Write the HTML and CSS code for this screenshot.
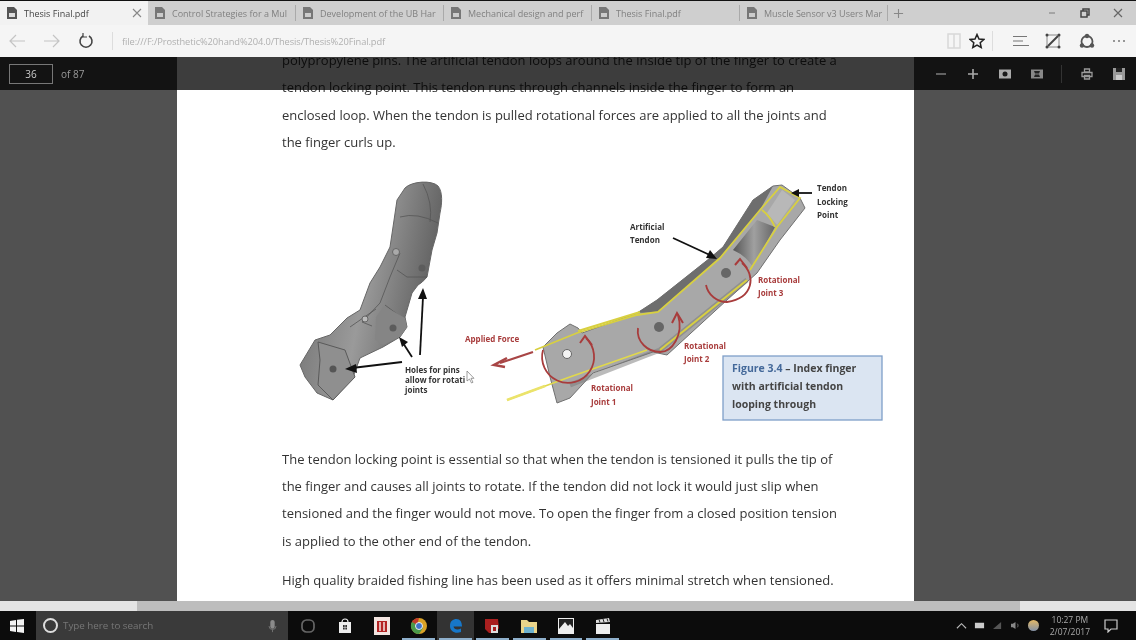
FILE: index.html
```html
<!DOCTYPE html>
<html lang="en">
<head>
<meta charset="utf-8">
<title>Thesis Final.pdf</title>
<link rel="stylesheet" href="styles.css">
</head>
<body>
<div class="app">
  <div class="tabbar">
    <div class="tab tab-active">
      <svg class="doc" viewBox="0 0 12 14"><path d="M1 1h7l3 3v9H1z" fill="#555"/><path d="M3 7h6v4H3z" fill="#ddd"/></svg>
      <span class="tab-label">Thesis Final.pdf</span>
      <svg class="tab-close" viewBox="0 0 10 10"><path d="M1 1l8 8M9 1l-8 8" stroke="#888" stroke-width="1.100"/></svg>
    </div>
    <div class="tab"><svg class="doc" viewBox="0 0 12 14"><path d="M1 1h7l3 3v9H1z" fill="#777"/><path d="M3 7h6v4H3z" fill="#ccc"/></svg><span class="tab-label">Control Strategies for a Mul</span></div>
    <div class="tab"><svg class="doc" viewBox="0 0 12 14"><path d="M1 1h7l3 3v9H1z" fill="#777"/><path d="M3 7h6v4H3z" fill="#ccc"/></svg><span class="tab-label">Development of the UB Har</span></div>
    <div class="tab"><svg class="doc" viewBox="0 0 12 14"><path d="M1 1h7l3 3v9H1z" fill="#777"/><path d="M3 7h6v4H3z" fill="#ccc"/></svg><span class="tab-label">Mechanical design and perf</span></div>
    <div class="tab"><svg class="doc" viewBox="0 0 12 14"><path d="M1 1h7l3 3v9H1z" fill="#777"/><path d="M3 7h6v4H3z" fill="#ccc"/></svg><span class="tab-label">Thesis Final.pdf</span></div>
    <div class="tab"><svg class="doc" viewBox="0 0 12 14"><path d="M1 1h7l3 3v9H1z" fill="#777"/><path d="M3 7h6v4H3z" fill="#ccc"/></svg><span class="tab-label">Muscle Sensor v3 Users Mar</span></div>
    <svg class="newtab" viewBox="0 0 12 12"><path d="M6 1v10M1 6h10" stroke="#888" stroke-width="1.200"/></svg>
    <div class="winctl">
      <svg viewBox="0 0 12 12"><path d="M3 6h6" stroke="#888" stroke-width="1.200"/></svg>
      <svg viewBox="0 0 12 12"><path d="M2 4h6v6H2zM4 4V2h6v6H8" fill="none" stroke="#444" stroke-width="1.500"/></svg>
      <svg viewBox="0 0 12 12"><path d="M2 2l8 8M10 2l-8 8" stroke="#666" stroke-width="1.200"/></svg>
    </div>
  </div>

  <div class="addrbar">
    <svg class="nav" viewBox="0 0 18 14"><path d="M17 7H2M8 1L2 7l6 6" fill="none" stroke="#c4c4c4" stroke-width="1.200"/></svg>
    <svg class="nav" viewBox="0 0 18 14"><path d="M1 7h15M10 1l6 6-6 6" fill="none" stroke="#c4c4c4" stroke-width="1.200"/></svg>
    <svg class="nav reload" viewBox="0 0 16 16"><path d="M5 3a6 6 0 1 0 6 0" fill="none" stroke="#444" stroke-width="1.600"/><path d="M5 0v4H9" fill="none" stroke="#444" stroke-width="1.200"/></svg>
    <span class="addr-sep"></span>
    <span class="url">file:///F:/Prosthetic%20hand%204.0/Thesis/Thesis%20Final.pdf</span>
    <div class="addr-tools">
      <svg class="ic-read" viewBox="0 0 16 16"><path d="M2 1h12v14H2zM8 1v14" fill="none" stroke="#d8d8d8" stroke-width="1.500"/></svg>
      <svg class="ic-star" viewBox="0 0 16 16"><path d="M8 1.500l2 4.500 4.800.5-3.600 3.200 1 4.800L8 12l-4.200 2.500 1-4.800L1.200 6.500 6 6z" fill="none" stroke="#222" stroke-width="1.500"/></svg>
      <span class="tool-sep"></span>
      <svg class="ic-hub" viewBox="0 0 16 16"><path d="M0 3.500h14M0 8h10M0 12.500h16" stroke="#777" stroke-width="1.200"/></svg>
      <svg class="ic-note" viewBox="0 0 16 16"><path d="M2 2h12v12H2z" fill="none" stroke="#888" stroke-width="1"/><path d="M3 13L13 3" stroke="#444" stroke-width="2"/><g fill="#444"><circle cx="2" cy="2" r="1.500"/><circle cx="14" cy="2" r="1.500"/><circle cx="2" cy="14" r="1.500"/><circle cx="14" cy="14" r="1.500"/></g></svg>
      <svg class="ic-share" viewBox="0 0 16 16"><circle cx="8" cy="8.500" r="5.500" fill="none" stroke="#555" stroke-width="1.800"/><circle cx="8" cy="3" r="2.200" fill="#555"/><circle cx="3" cy="12.500" r="2.200" fill="#555"/><circle cx="13" cy="12.500" r="2.200" fill="#555"/></svg>
      <svg class="ic-dots" viewBox="0 0 16 16"><g fill="#777"><circle cx="3" cy="8" r="1"/><circle cx="8" cy="8" r="1"/><circle cx="13" cy="8" r="1"/></g></svg>
    </div>
  </div>

  <div class="viewer">
    <div class="pdf-toolbar">
      <div class="pager"><span class="page-input">36</span><span class="page-of">of 87</span></div>
      <div class="pdf-tools">
        <svg viewBox="0 0 12 12"><path d="M1 6h10" stroke="#777" stroke-width="1.600"/></svg>
        <svg viewBox="0 0 12 12"><path d="M1 6h10M6 1v10" stroke="#aaa" stroke-width="1.600"/></svg>
        <svg viewBox="0 0 12 12"><path d="M0 1.500h12v9H0z" fill="#aaa"/><circle cx="6" cy="6" r="2.500" fill="#1a1a1a"/></svg>
        <svg viewBox="0 0 12 12"><path d="M0 1.500h12v9H0z" fill="#888"/><path d="M3 3h6L8 5.500H4zM3 9h6L8 6.500H4z" fill="#222"/></svg>
        <span class="pdf-sep"></span>
        <svg viewBox="0 0 12 12"><path d="M3.500 1h5v3h-5zM1 4.500h10v4H1zM3.500 7.500h5V11h-5z" fill="none" stroke="#999" stroke-width="1.300"/></svg>
        <svg viewBox="0 0 12 12"><path d="M0 0h12v12H0z" fill="#999"/><path d="M3 0h6v4H3z" fill="#222"/><path d="M3 7h6v5H3z" fill="#ccc"/></svg>
      </div>
    </div>
    <article class="page">
      <p class="line">polypropylene pins. The artificial tendon loops around the inside tip of the finger to create a</p>
      <p class="line">tendon locking point. This tendon runs through channels inside the finger to form an</p>
      <p class="line">enclosed loop. When the tendon is pulled rotational forces are applied to all the joints and</p>
      <p class="line">the finger curls up.</p>
      <div class="figure">
        <svg class="diagram" viewBox="177 157 737 289">
          <defs>
            <linearGradient id="g1" x1="0" y1="0" x2="1" y2="0.300"><stop offset="0" stop-color="#6a6a6a"/><stop offset="0.550" stop-color="#9a9a9a"/><stop offset="1" stop-color="#5f5f5f"/></linearGradient>
            <linearGradient id="g2" x1="0" y1="0" x2="1" y2="0"><stop offset="0" stop-color="#555"/><stop offset="0.500" stop-color="#a0a0a0"/><stop offset="1" stop-color="#666"/></linearGradient>
          </defs>
          <!-- left finger -->
          <path d="M405 188C412 181 432 180 438 186C443 192 442 204 440 213L437 233L432 250L427 277Q422 283 418 285L412 293L405 317L407 327L400 337L383 347L360 358L353 377L333 400L317 393L305 377L300 365L315 340L330 335L347 318L360 310L370 283L380 267L390 247L393 227L397 200Z" fill="url(#g1)" stroke="#666" stroke-linejoin="round"/>
          <path d="M400 217Q417 212 438 223M423 184Q433 203 430 222M400 253L390 277L380 303L362 322M397 270L407 277H427M350 327L376 309M385 305L405 320M362 322L372 326" fill="none" stroke="#555" stroke-width=".8"/>
          <path d="M376 317L384 306L405 318L407 327L400 337L383 345L375 340Z" fill="#858585"/>
          <path d="M318 342L345 350L355 377L333 400L318 385L320 360Z" fill="#8f8f8f" stroke="#5a5a5a"/>
          <circle cx="396" cy="252" r="3.500" fill="#aaa" stroke="#666"/>
          <circle cx="422" cy="268" r="3.500" fill="#5c5c5c"/>
          <circle cx="393" cy="328" r="3.500" fill="#5c5c5c"/>
          <circle cx="365" cy="319" r="3" fill="#bbb" stroke="#666"/>
          <circle cx="333" cy="369" r="3.500" fill="#555"/>
          <path d="M402 362L352 368" stroke="#111" stroke-width="2.200"/><path d="M345 369l11-5 1 9z" fill="#111"/>
          <path d="M420 355L423 297" stroke="#111" stroke-width="1.800"/><path d="M423 288l-5 11h9z" fill="#111"/>
          <path d="M412 357L403 343" stroke="#111" stroke-width="1.800"/><path d="M399 337l9 5-6 5z" fill="#111"/>
          <text class="lbl" x="405" y="373">Holes for pins</text>
          <text class="lbl" x="405" y="383">allow for rotati</text>
          <text class="lbl" x="405" y="393">joints</text>
          <path d="M467 371v10l2.500-2 2 4 1.500-.7-2-4h3z" fill="#fff" stroke="#777" stroke-width=".7"/>
          <!-- right finger -->
          <path d="M543 347L557 333L570 324L578 328L582 333L637 313L657 300L710 258L723 247L753 200L773 186L782 185L800 198L805 208L780 240L757 273L727 300L667 355L653 352L593 373L570 398L557 403L550 377Z" fill="#a8a8a8" stroke="#707070" stroke-linejoin="round"/>
          <path d="M637 313L657 300L710 258L723 247L753 200L773 186L760 210L720 258L658 312Z" fill="#6e6e6e"/>
          <path d="M733 250L757 220L775 227L753 267Q745 255 733 250Z" fill="url(#g2)"/>
          <path d="M767 213L782 190L795 200L777 225Z" fill="#b8b8b8"/>
          <path d="M570 385L647 355L660 350L747 280" fill="none" stroke="#777" stroke-width="5" opacity=".5"/>
          <path d="M535 350L577 333L637 315L658 312L720 258L760 210L780 187L800 198L777 227L750 270" fill="none" stroke="#d8d040" stroke-width="1.800"/>
          <path d="M762 210Q770 216 775 227" fill="none" stroke="#d8d040" stroke-width="1.800"/>
          <path d="M507 400L567 378L647 350" fill="none" stroke="#e0d84c" stroke-width="1.800"/>
          <path d="M507 400L545 386" stroke="#ebe36b" stroke-width="2.500"/>
          <path d="M660 350L747 280" fill="none" stroke="#d8d040" stroke-width="2"/>
          <path d="M640 312L578 331" stroke="#d8d040" stroke-width="2"/>
          <path d="M586 338A26 26 0 1 1 543 350" fill="none" stroke="#a83c3c" stroke-width="1.800"/>
          <path d="M678 315C684 335 672 352 660 352C648 352 636 342 638 328" fill="none" stroke="#a83c3c" stroke-width="1.800"/>
          <path d="M742 263C756 275 754 298 727 302C717 302 708 295 706 285" fill="none" stroke="#a83c3c" stroke-width="1.800"/>
          <path d="M580 343L585 336L592 345M672 323L677 313L683 323M735 265L740 259L747 268" fill="none" stroke="#a83c3c" stroke-width="2"/>
          <circle cx="567" cy="354" r="4.500" fill="#f4f4f4" stroke="#666"/>
          <circle cx="659" cy="327" r="5" fill="#666"/>
          <circle cx="726" cy="273" r="5" fill="#666"/>
          <path d="M533 352L500 363" stroke="#a84545" stroke-width="2.200"/><path d="M507 358L494 365L505 367" stroke="#a84545" stroke-width="2.500" fill="none"/>
          <path d="M673 238L712 256" stroke="#111" stroke-width="1.800"/><path d="M717 259l-11-1 4-8z" fill="#111"/>
          <path d="M812 193H797" stroke="#111" stroke-width="1.800"/><path d="M791 193l8-4v8z" fill="#111"/>
          <text class="lbl" x="817" y="191">Tendon</text>
          <text class="lbl" x="817" y="205">Locking</text>
          <text class="lbl" x="817" y="218">Point</text>
          <text class="lbl" x="630" y="230">Artificial</text>
          <text class="lbl" x="630" y="243">Tendon</text>
          <text class="lbl red" x="465" y="342">Applied Force</text>
          <text class="lbl red" x="758" y="283">Rotational</text>
          <text class="lbl red" x="758" y="296">Joint 3</text>
          <text class="lbl red" x="684" y="349">Rotational</text>
          <text class="lbl red" x="684" y="362">Joint 2</text>
          <text class="lbl red" x="591" y="391">Rotational</text>
          <text class="lbl red" x="591" y="405">Joint 1</text>
          <rect x="723" y="356" width="159" height="64" fill="#dbe5f2" stroke="#7f9fc8" stroke-width="1.300"/>
          <text class="cap" x="732" y="372"><tspan class="cap-blue">Figure 3.4</tspan> – Index finger</text>
          <text class="cap" x="732" y="390">with artificial tendon</text>
          <text class="cap" x="732" y="408">looping through</text>
        </svg>
      </div>
      <p class="line">The tendon locking point is essential so that when the tendon is tensioned it pulls the tip of</p>
      <p class="line">the finger and causes all joints to rotate. If the tendon did not lock it would just slip when</p>
      <p class="line">tensioned and the finger would not move. To open the finger from a closed position tension</p>
      <p class="line">is applied to the other end of the tendon.</p>
      <p class="line para">High quality braided fishing line has been used as it offers minimal stretch when tensioned.</p>
    </article>
  </div>

  <div class="hscroll"><div class="hthumb"></div></div>

  <div class="taskbar">
    <svg class="win" viewBox="0 0 14 14"><path d="M0 2l6-1v5.500H0zM7 .8l7-.8v6.500H7zM0 7.500h6V13l-6-1zM7 7.500h7V14l-7-1z" fill="#f2f2f2"/></svg>
    <div class="search">
      <span class="cortana"></span>
      <span class="search-text">Type here to search</span>
      <svg class="mic" viewBox="0 0 10 16"><rect x="2.500" y="1" width="5" height="10" rx="2.500" fill="#8a8a8a"/><path d="M1 8a4 4 0 0 0 8 0M5 12v3" fill="none" stroke="#777"/></svg>
    </div>
    <div class="tray-apps">
      <span class="app-ic"><svg viewBox="0 0 18 18"><rect x="3" y="3" width="12" height="12" rx="4.500" fill="none" stroke="#666" stroke-width="1.700"/></svg></span>
      <span class="app-ic"><svg viewBox="0 0 18 18"><path d="M3 5h12v11H3z" fill="#eee"/><path d="M6 5a3 3 0 0 1 6 0" fill="none" stroke="#eee" stroke-width="1.200"/><path d="M7 8h1.700v2H7zM9.300 8H11v2H9.300zM7 10.600h1.700v2H7zM9.300 10.600H11v2H9.300z" fill="#333"/></svg></span>
      <span class="app-ic"><svg viewBox="0 0 18 18"><path d="M1 0h16v18H1z" fill="#f2e4e0"/><path d="M4 4h10v11H4z" fill="#b32323"/><path d="M7 5v9M11 5v9" stroke="#f2e4e0" stroke-width="1.500"/></svg></span>
      <span class="app-ic app-run"><svg viewBox="0 0 18 18"><circle cx="9" cy="9" r="8" fill="#d9a227"/><path d="M9 1a8 8 0 0 0-7 4l4 7z" fill="#c23a2b"/><path d="M2 5a8 8 0 0 0 7 12l4-6z" fill="#4a9a4a"/><circle cx="9" cy="9" r="3.500" fill="#3f74c9" stroke="#eee"/></svg></span>
      <span class="app-ic app-on app-run"><svg viewBox="0 0 18 18"><path d="M3 9c0-5 3-7 6.500-7S15 5 15 9.500H6.500c.5 3 4 4 7.500 2v3.500c-5 2-11 0-11-6z" fill="#1777c9"/></svg></span>
      <span class="app-ic app-run"><svg viewBox="0 0 18 18"><path d="M2 2h13l1 9-3 5H6L2 12z" fill="#a91f1f"/><path d="M8 8h7v8H8z" fill="#ddd"/><path d="M10 10h3v4h-3z" fill="#a91f1f"/></svg></span>
      <span class="app-ic app-run"><svg viewBox="0 0 18 18"><path d="M1 3h6l2 2h8v11H1z" fill="#e9d48a"/><path d="M4 10h10v6H4z" fill="#6fb3cf"/></svg></span>
      <span class="app-ic app-run"><svg viewBox="0 0 18 18"><path d="M1 1h16v16H1z" fill="#eee"/><path d="M2 2h14v9l-3-4-2 2-3-4-6 7z" fill="#222"/></svg></span>
      <span class="app-ic app-run"><svg viewBox="0 0 18 18"><path d="M2 7h14v10H2z" fill="#eee"/><path d="M2 3l13-2 1 4-14 1z" fill="#ddd"/><path d="M5 2.500l1 3M9 2l1 3M13 1.500l1 3" stroke="#222"/></svg></span>
    </div>
    <div class="sys">
      <svg viewBox="0 0 12 8"><path d="M1 7l5-5 5 5" fill="none" stroke="#bbb" stroke-width="1.200"/></svg>
      <svg viewBox="0 0 12 8"><rect x="1" y="1" width="10" height="6" fill="#ccc"/></svg>
      <svg viewBox="0 0 12 10"><path d="M1 9L10 1v8z" fill="#555"/></svg>
      <svg viewBox="0 0 12 10"><path d="M1 3h2l3-2v8L3 7H1z" fill="#888"/><path d="M8 3c1 1 1 3 0 4" fill="none" stroke="#888"/></svg>
      <span class="weather"></span>
      <div class="clock"><span>10:27 PM</span><span>2/07/2017</span></div>
      <svg class="notif" viewBox="0 0 14 14"><path d="M1 1h12v9H7l-3 3v-3H1z" fill="none" stroke="#ccc" stroke-width="1.200"/></svg>
    </div>
  </div>
</div>
</body>
</html>
```

FILE: styles.css
```css
* { box-sizing: border-box; }
html, body { margin: 0; padding: 0; }
body { width: 1136px; height: 640px; overflow: hidden; background: #000; font-family: "Open Sans", "Liberation Sans", sans-serif; }
p { margin: 0; }

.app { display: flex; flex-direction: column; width: 1136px; height: 640px; }

.tabbar { flex: 0 0 25px; display: flex; align-items: center; background: #cfcfcf; border-top: 1px solid #111; }
.tab { width: 148px; height: 24px; display: flex; align-items: center; padding: 0 4px 0 6px; gap: 6px; background: linear-gradient(#aaa, #aaa) right center / 1px 16px no-repeat; }
.tab-active { background: #f2f2f2; }
.doc { width: 12px; height: 14px; flex: none; }
.tab-label { font-size: 9px; color: #808080; white-space: nowrap; overflow: hidden; filter: blur(.55px); flex: 1; }
.tab-active .tab-label { color: #444; }
.tab-close { width: 10px; height: 10px; margin-right: 2px; filter: blur(.3px); }
.newtab { width: 11px; height: 11px; margin-left: 5px; }
.winctl { margin-left: auto; display: flex; gap: 21px; padding-right: 12px; filter: blur(.3px); }
.winctl svg { width: 12px; height: 12px; }

.addrbar { flex: 0 0 32px; display: flex; align-items: center; background: #f5f5f5; padding: 0 9px 0 8px; }
.nav { width: 18px; height: 14px; margin-right: 17px; filter: blur(.3px); }
.reload { width: 16px; height: 16px; margin-right: 18px; }
.addr-sep { width: 1px; height: 18px; background: #ddd; margin-right: 9px; }
.url { font-size: 9.300px; color: #b0b0b0; filter: blur(.55px); letter-spacing: -.1px; }
.addr-tools { margin-left: auto; display: flex; align-items: center; filter: blur(.4px); }
.addr-tools svg { width: 16px; height: 16px; }
.ic-star { margin-left: 7px; }
.tool-sep { width: 1px; height: 20px; background: #ddd; margin: 0 20px 0 7px; }
.ic-note { margin-left: 16px; }
.ic-share { margin-left: 18px; }
.ic-dots { margin-left: 16px; }

.viewer { position: relative; flex: 1; min-height: 0; background: #515151; overflow: hidden; }
.pdf-toolbar { position: absolute; inset: 0 0 auto 0; height: 33px; background: rgba(0,0,0,.76); display: flex; align-items: center; justify-content: space-between; padding: 0 11px 0 9px; z-index: 2; }
.pager { display: flex; align-items: center; gap: 8px; }
.page-input { width: 44px; height: 20px; border: 1px solid #777; color: #ccc; font-size: 10px; line-height: 18px; text-align: center; filter: blur(.4px); }
.page-of { font-size: 10px; color: #999; filter: blur(.45px); }
.pdf-tools { display: flex; align-items: center; gap: 20px; filter: blur(.35px); }
.pdf-tools svg { width: 12px; height: 12px; }
.pdf-sep { width: 1px; height: 18px; background: #333; margin: 0 -1px 0 -2px; }

.page { width: 737px; height: 554px; margin: -10px 0 0 177px; background: #fff; padding: 0 85px 0 105px; color: #333; }
.line { font-size: 13px; line-height: 27.400px; white-space: nowrap; filter: blur(.4px); }
.para { margin-top: 12px; }
.figure { height: 289px; margin: 0 -85px 0 -105px; }
.diagram { display: block; width: 737px; height: 289px; filter: blur(.7px); }
.lbl { font: 700 8px "Open Sans", sans-serif; fill: #333; }
.red { fill: #a83c3c; }
.cap { font: 700 10.500px "Open Sans", sans-serif; fill: #444; }
.cap-blue { fill: #44699a; }

.hscroll { flex: 0 0 10px; background: #e4e4e4; padding: 0 116px 0 137px; }
.hthumb { height: 10px; background: #bdbdbd; }

.taskbar { flex: 0 0 29px; display: flex; align-items: center; background: #0c0c0c; }
.win { width: 14px; height: 14px; margin: 0 12px 0 10px; filter: blur(.3px); }
.search { width: 252px; height: 29px; background: #3a3a3a; display: flex; align-items: center; padding: 0 7px; }
.cortana { width: 15px; height: 15px; border: 2px solid #ddd; border-radius: 50%; margin-right: 5px; filter: blur(.3px); }
.search-text { font-size: 9.800px; color: #777; filter: blur(.5px); }
.mic { width: 9px; height: 14px; margin-left: auto; margin-right: 4px; filter: blur(.3px); }
.tray-apps { display: flex; margin-left: 2px; }
.app-ic { position: relative; width: 36.800px; height: 29px; display: flex; align-items: center; justify-content: center; }
.app-ic svg { width: 18px; height: 18px; filter: blur(.5px); }
.app-run::after { content: ""; position: absolute; left: 2px; right: 2px; bottom: 0; height: 2px; background: #8fb0cc; }
.app-on { background: #333; }
.sys { margin-left: auto; display: flex; align-items: center; gap: 7px; padding-right: 18px; filter: blur(.35px); }
.sys > svg { width: 11px; height: 9px; }
.weather { width: 11px; height: 11px; border-radius: 50%; background: linear-gradient(#e3b866, #8391a6); }
.clock { display: flex; flex-direction: column; align-items: center; font-size: 8.500px; line-height: 12px; color: #aaa; margin: 0 7px 0 4px; }
.sys > .notif { width: 14px; height: 14px; }
```
